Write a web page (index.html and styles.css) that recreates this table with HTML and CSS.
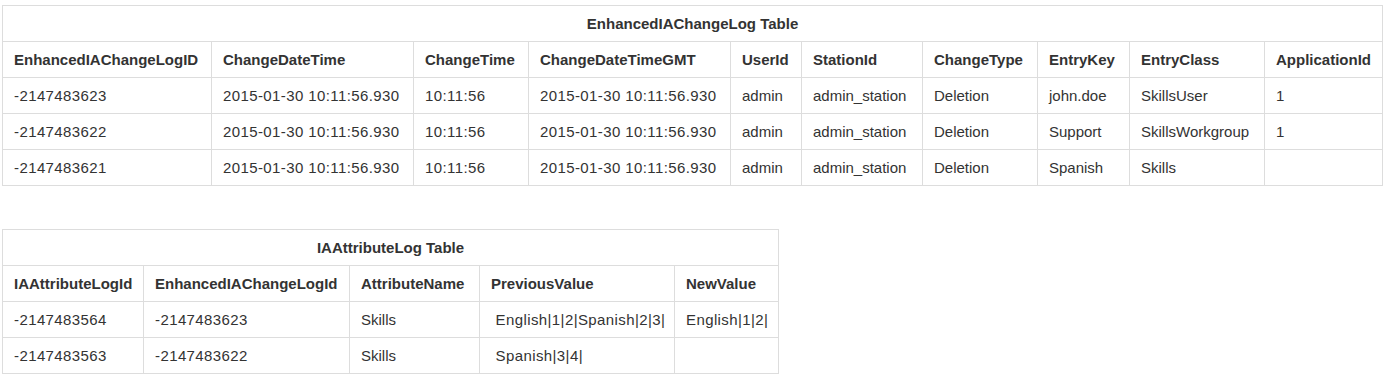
FILE: index.html
```html
<!DOCTYPE html>
<html>
<head>
<meta charset="utf-8">
<link rel="stylesheet" href="styles.css">
</head>
<body>
<div class="page">
  <table class="grid grid-main">
    <colgroup>
      <col class="c209"><col class="c202"><col class="c115"><col class="c202"><col class="c71">
      <col class="c121"><col class="c115"><col class="c92"><col class="c135"><col class="c118">
    </colgroup>
    <thead>
      <tr><th class="title" colspan="10">EnhancedIAChangeLog Table</th></tr>
      <tr>
        <th>EnhancedIAChangeLogID</th><th>ChangeDateTime</th><th>ChangeTime</th><th>ChangeDateTimeGMT</th><th>UserId</th>
        <th>StationId</th><th>ChangeType</th><th>EntryKey</th><th>EntryClass</th><th>ApplicationId</th>
      </tr>
    </thead>
    <tbody>
      <tr><td class="num">-2147483623</td><td class="num">2015-01-30 10:11:56.930</td><td class="num">10:11:56</td><td class="num">2015-01-30 10:11:56.930</td><td>admin</td><td>admin_station</td><td>Deletion</td><td>john.doe</td><td>SkillsUser</td><td class="num">1</td></tr>
      <tr><td class="num">-2147483622</td><td class="num">2015-01-30 10:11:56.930</td><td class="num">10:11:56</td><td class="num">2015-01-30 10:11:56.930</td><td>admin</td><td>admin_station</td><td>Deletion</td><td>Support</td><td>SkillsWorkgroup</td><td class="num">1</td></tr>
      <tr><td class="num">-2147483621</td><td class="num">2015-01-30 10:11:56.930</td><td class="num">10:11:56</td><td class="num">2015-01-30 10:11:56.930</td><td>admin</td><td>admin_station</td><td>Deletion</td><td>Spanish</td><td>Skills</td><td></td></tr>
    </tbody>
  </table>

  <table class="grid grid-attr">
    <colgroup>
      <col class="c141"><col class="c206"><col class="c130"><col class="c195"><col class="c104">
    </colgroup>
    <thead>
      <tr><th class="title" colspan="5">IAAttributeLog Table</th></tr>
      <tr><th>IAAttributeLogId</th><th>EnhancedIAChangeLogId</th><th>AttributeName</th><th>PreviousValue</th><th>NewValue</th></tr>
    </thead>
    <tbody>
      <tr><td class="num">-2147483564</td><td class="num">-2147483623</td><td>Skills</td><td class="num">&nbsp;English|1|2|Spanish|2|3|</td><td class="num">English|1|2|</td></tr>
      <tr><td class="num">-2147483563</td><td class="num">-2147483622</td><td>Skills</td><td class="num">&nbsp;Spanish|3|4|</td><td></td></tr>
    </tbody>
  </table>
</div>
</body>
</html>
```

FILE: styles.css
```css
html, body {
  margin: 0;
  padding: 0;
  background: #fff;
}

.page {
  padding: 5px 8px 0 2px;
  font-family: "Liberation Sans", Arial, Helvetica, sans-serif;
  font-size: 15px;
  line-height: 20px;
  color: #333;
}

.grid {
  border-collapse: collapse;
  border-spacing: 0;
  table-layout: fixed;
}

.grid-main { width: 1381px; margin-bottom: 43px; }
.grid-attr { width: 777px; }

.grid th,
.grid td {
  border: 1px solid #ddd;
  padding: 8px 11px 7px;
  text-align: left;
  vertical-align: top;
  white-space: nowrap;
  overflow: hidden;
}

.grid th {
  font-weight: bold;
}

.grid th.title {
  text-align: center;
}

.grid td.num {
  letter-spacing: 0.4px;
}

.c209 { width: 209px; }
.c202 { width: 202px; }
.c115 { width: 115px; }
.c71 { width: 71px; }
.c121 { width: 121px; }
.c92 { width: 92px; }
.c135 { width: 135px; }
.c118 { width: 118px; }
.c141 { width: 141px; }
.c206 { width: 206px; }
.c130 { width: 130px; }
.c195 { width: 195px; }
.c104 { width: 104px; }
```
